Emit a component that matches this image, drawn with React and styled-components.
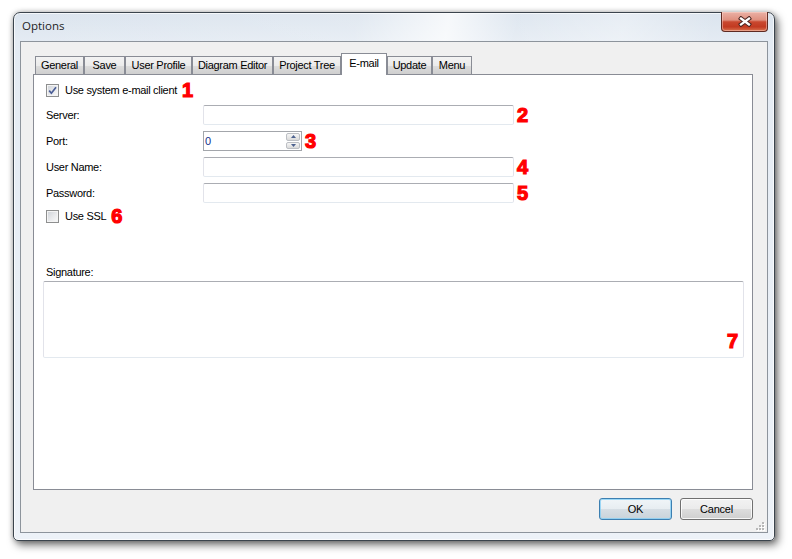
import React from 'react'
import styled, { createGlobalStyle } from 'styled-components'

const GlobalStyle = createGlobalStyle`
  html, body {
    margin: 0;
    padding: 0;
    background: #fff;
  }
  body {
    font-family: "Liberation Sans", Arial, sans-serif;
    font-size: 11px;
    color: #000;
  }
`

const tabs = [
  { label: 'General', width: 49 },
  { label: 'Save', width: 41 },
  { label: 'User Profile', width: 67 },
  { label: 'Diagram Editor', width: 81 },
  { label: 'Project Tree', width: 68 },
  { label: 'E-mail', width: 46, active: true },
  { label: 'Update', width: 45 },
  { label: 'Menu', width: 40 },
]

const fields = [
  { label: 'Server:', mark: '2' },
  { label: 'Port:', mark: '3', spin: true },
  { label: 'User Name:', mark: '4' },
  { label: 'Password:', mark: '5' },
]

const Page = styled.div`
  width: 792px;
  height: 559px;
  box-sizing: border-box;
  padding: 12px 0 0 13px;
  overflow: hidden;
`

const Window = styled.div`
  width: 762px;
  height: 529px;
  box-sizing: border-box;
  border: 1px solid #3b444d;
  border-radius: 7px 7px 5px 5px;
  background: linear-gradient(180deg, #dbe4ee 0px, #e4ebf3 28px, #edf2f8 100%);
  box-shadow: 3px 4px 9px rgba(0, 0, 0, 0.55), 0 0 5px rgba(0, 0, 0, 0.25),
    inset 0 0 0 1px rgba(255, 255, 255, 0.7);
  display: flex;
  flex-direction: column;
`

const TitleBar = styled.div`
  height: 28px;
  flex: none;
  display: flex;
  justify-content: space-between;
  align-items: flex-start;
  border-radius: 6px 6px 0 0;
  background: linear-gradient(
    100deg,
    rgba(255, 255, 255, 0) 0%,
    rgba(255, 255, 255, 0.15) 45%,
    rgba(255, 255, 255, 0.75) 57%,
    rgba(255, 255, 255, 0.1) 66%,
    rgba(255, 255, 255, 0.35) 80%,
    rgba(255, 255, 255, 0) 92%
  );
`

const Title = styled.div`
  font-family: "Open Sans", "Noto Sans", sans-serif;
  font-size: 11.5px;
  line-height: 16px;
  color: #1e1e1e;
  padding: 5px 0 0 8px;
`

const CloseButton = styled.div`
  width: 47px;
  height: 20px;
  margin: -1px 6px 0 0;
  box-sizing: border-box;
  border: 1px solid #5e2a22;
  border-top: none;
  border-radius: 0 0 4px 4px;
  background: linear-gradient(
    180deg,
    #eab1a6 0%,
    #e0907f 42%,
    #c9482f 52%,
    #c23a21 78%,
    #d9734f 100%
  );
  box-shadow: inset 0 0 0 1px rgba(255, 220, 210, 0.45);
  display: flex;
  align-items: center;
  justify-content: center;
`

const Client = styled.div`
  flex: 1;
  margin: 0 6px 7px 6px;
  border: 1px solid #8d949c;
  background: #f0f0f0;
  position: relative;
  display: flex;
  flex-direction: column;
  padding: 11px 14px 0 12px;
`

const TabStrip = styled.div`
  height: 21px;
  display: flex;
  align-items: flex-end;
  padding-left: 2px;
  position: relative;
  z-index: 1;
`

const Tab = styled.div`
  width: ${p => p.$w}px;
  height: ${p => (p.$active ? 22 : 18)}px;
  margin-bottom: ${p => (p.$active ? -1 : 0)}px;
  box-sizing: border-box;
  border: 1px solid #898c95;
  border-bottom: none;
  background: ${p =>
    p.$active ? '#fff' : 'linear-gradient(180deg, #f3f3f3 0%, #ebebeb 50%, #dddddd 51%, #cfcfcf 100%)'};
  padding-top: ${p => (p.$active ? 2 : 1)}px;
  line-height: 15px;
  text-align: center;
  letter-spacing: -0.3px;
  white-space: nowrap;
`

const Panel = styled.div`
  height: 416px;
  box-sizing: border-box;
  border: 1px solid #898c95;
  background: #fff;
  padding: 0 8px 0 9px;
  display: flex;
  flex-direction: column;
`

const CheckRow = styled.div`
  display: flex;
  align-items: center;
  height: 13px;
  gap: 6px;
  padding-left: 3px;
  margin-top: ${p => p.$top}px;
  letter-spacing: -0.3px;
  line-height: 13px;
`

const CheckBox = styled.div`
  width: 13px;
  height: 13px;
  box-sizing: border-box;
  border: 1px solid #8e8f8f;
  background: linear-gradient(135deg, #cdd1d7 0%, #e9eaec 55%, #fafafa 100%);
  box-shadow: inset 0 0 0 1px #f4f4f4;
  display: flex;
  align-items: center;
  justify-content: center;
`

const Mark = styled.span`
  font-family: "Liberation Sans", Arial, sans-serif;
  font-weight: 700;
  font-size: 20px;
  line-height: 13px;
  color: #ff0000;
  -webkit-text-stroke: 1.2px #ff0000;
  letter-spacing: 0;
  margin-left: ${p => p.$gap ?? 3}px;
`

const Fields = styled.div`
  display: flex;
  flex-direction: column;
  gap: 6px;
  margin-top: 8px;
  padding-left: 3px;
`

const FieldRow = styled.div`
  height: 20px;
  display: flex;
  align-items: center;
`

const Label = styled.div`
  width: 157px;
  flex: none;
  line-height: 13px;
  letter-spacing: -0.3px;
`

const TextBox = styled.div`
  width: 311px;
  height: 20px;
  box-sizing: border-box;
  border: 1px solid #e2e3ea;
  border-top-color: #abadb3;
  border-bottom-color: #e3e9ef;
  border-radius: 2px;
  background: #fff;
`

const SpinBox = styled.div`
  width: 99px;
  height: 20px;
  box-sizing: border-box;
  border: 1px solid #a3a6ab;
  background: #fff;
  display: flex;
  align-items: stretch;
`

const SpinValue = styled.div`
  flex: 1;
  padding-left: 1px;
  line-height: 18px;
  color: #12308a;
`

const SpinButtons = styled.div`
  width: 14px;
  display: flex;
  flex-direction: column;
  gap: 1px;
  padding: 1px 1px 1px 0;
`

const SpinButton = styled.div`
  flex: 1;
  box-sizing: border-box;
  border: 1px solid #bcbfc4;
  border-radius: 2px;
  background: linear-gradient(180deg, #f6f6f6 0%, #e8e8e8 50%, #dadada 100%);
  display: flex;
  align-items: center;
  justify-content: center;
`

const SignatureLabel = styled.div`
  margin-top: 43px;
  padding-left: 3px;
  line-height: 13px;
  letter-spacing: -0.3px;
`

const SignatureBox = styled.div`
  margin-top: 2px;
  height: 77px;
  box-sizing: border-box;
  border: 1px solid #e2e3ea;
  border-top-color: #abadb3;
  border-bottom-color: #e3e9ef;
  border-radius: 2px;
  background: #fff;
  position: relative;
`

const CornerMark = styled(Mark)`
  position: absolute;
  right: 5px;
  bottom: 8px;
  line-height: 16px;
  margin: 0;
`

const Footer = styled.div`
  display: flex;
  justify-content: flex-end;
  gap: 8px;
  padding-top: 8px;
`

const Button = styled.div`
  width: 73px;
  height: 22px;
  box-sizing: border-box;
  border: 1px solid ${p => (p.$default ? '#3c7fb1' : '#707070')};
  border-radius: 3px;
  background: ${p =>
    p.$default
      ? 'linear-gradient(180deg, #f0f5f8 0%, #e7edf1 50%, #d6dee4 51%, #c9d3da 100%)'
      : 'linear-gradient(180deg, #f2f2f2 0%, #ebebeb 50%, #dddddd 51%, #cfcfcf 100%)'};
  box-shadow: inset 0 0 0 1px ${p => (p.$default ? 'rgba(128, 206, 245, 0.75)' : 'rgba(255, 255, 255, 0.8)')};
  display: flex;
  align-items: center;
  justify-content: center;
  line-height: 13px;
  letter-spacing: -0.2px;
`

const Grip = styled.svg`
  position: absolute;
  right: 2px;
  bottom: 1px;
`

const CloseGlyph = () => (
  <svg width="14" height="11" viewBox="0 0 14 11">
    <path d="M3 2.5 L11 8.5 M11 2.5 L3 8.5" stroke="#4a2420" strokeWidth="4.2" strokeLinecap="square" />
    <path d="M3 2.5 L11 8.5 M11 2.5 L3 8.5" stroke="#fff" strokeWidth="2.3" strokeLinecap="square" />
  </svg>
)

const Check = ({ checked }) => (
  <CheckBox>
    {checked && (
      <svg width="9" height="9" viewBox="0 0 9 9">
        <path d="M1.2 4.6 L3.4 7.2 L8 1.2" fill="none" stroke="#4a5d96" strokeWidth="1.7" />
      </svg>
    )}
  </CheckBox>
)

const Arrow = ({ up }) => (
  <svg width="5" height="3" viewBox="0 0 5 3">
    <path d={up ? 'M0 3 L2.5 0 L5 3 Z' : 'M0 0 L2.5 3 L5 0 Z'} fill="#4d628f" />
  </svg>
)

const GripDots = () => {
  const dots = [
    [6, 0],
    [6, 3], [3, 3],
    [6, 6], [3, 6], [0, 6],
  ]
  return (
    <Grip width="9" height="9" viewBox="0 0 9 9">
      {dots.map(([x, y]) => (
        <g key={`${x}-${y}`}>
          <rect x={x + 1} y={y + 1} width="2" height="2" fill="#fff" />
          <rect x={x} y={y} width="2" height="2" fill="#b7b7b7" />
        </g>
      ))}
    </Grip>
  )
}

const App = () => {
  return (
    <Page>
      <GlobalStyle />
      <Window>
        <TitleBar>
          <Title>Options</Title>
          <CloseButton>
            <CloseGlyph />
          </CloseButton>
        </TitleBar>
        <Client>
          <TabStrip>
            {tabs.map(t => (
              <Tab key={t.label} $w={t.width} $active={t.active}>
                {t.label}
              </Tab>
            ))}
          </TabStrip>
          <Panel>
            <CheckRow $top={9}>
              <Check checked />
              <span>Use system e-mail client</span>
              <Mark $gap={-1}>1</Mark>
            </CheckRow>

            <Fields>
              {fields.map(f => (
                <FieldRow key={f.label}>
                  <Label>{f.label}</Label>
                  {f.spin ? (
                    <SpinBox>
                      <SpinValue>0</SpinValue>
                      <SpinButtons>
                        <SpinButton><Arrow up /></SpinButton>
                        <SpinButton><Arrow /></SpinButton>
                      </SpinButtons>
                    </SpinBox>
                  ) : (
                    <TextBox />
                  )}
                  <Mark>{f.mark}</Mark>
                </FieldRow>
              ))}
            </Fields>

            <CheckRow $top={7}>
              <Check />
              <span>Use SSL</span>
              <Mark $gap={-1}>6</Mark>
            </CheckRow>

            <SignatureLabel>Signature:</SignatureLabel>
            <SignatureBox>
              <CornerMark>7</CornerMark>
            </SignatureBox>
          </Panel>
          <Footer>
            <Button $default>OK</Button>
            <Button>Cancel</Button>
          </Footer>
          <GripDots />
        </Client>
      </Window>
    </Page>
  )
}

export default App
